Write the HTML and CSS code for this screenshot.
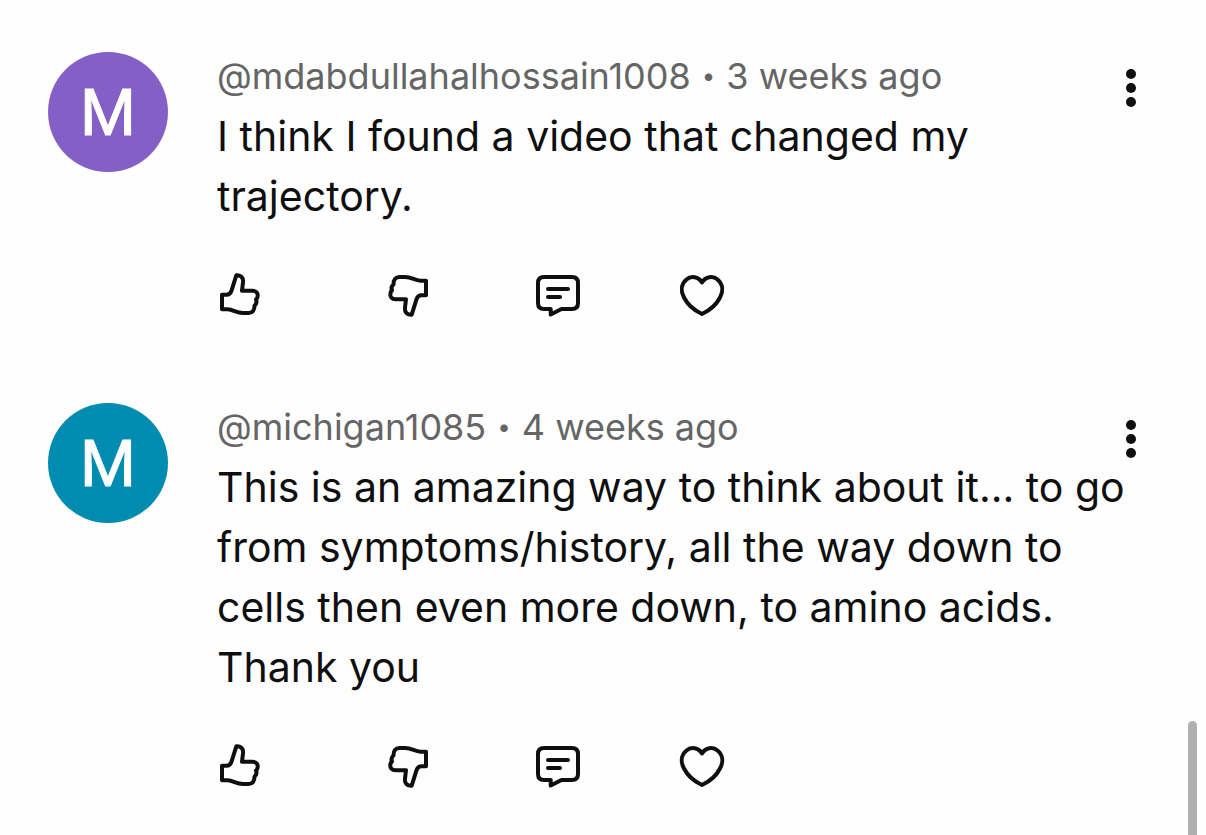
FILE: index.html
```html
<!DOCTYPE html>
<html lang="en">
<head>
<meta charset="utf-8">
<meta name="viewport" content="width=device-width, initial-scale=1">
<title>Comments</title>
<link rel="stylesheet" href="styles.css">
</head>
<body>
<svg class="sprite" aria-hidden="true">
  <symbol id="like" viewBox="0 0 48 48"><path d="M19.300 4.300C23.600 4 26.300 6.500 26.100 10.500L25 19.800H35.500C39 19.800 41.300 22 40.600 25.500C40.500 27 40 27.800 39 28.500C40 31 39.500 33 37.500 34.500C37.700 39 35.500 42 31.500 42H26C19 42 16.500 38.500 10.500 38.300H5V23.700H9.500C12 23.700 13.500 22.500 14.300 20.300Z"/></symbol>
  <symbol id="reply" viewBox="0 0 48 48"><path d="M9 6H37Q43 6 43 12V32Q43 38 37 38H26.500L15.700 43.500V38H9Q3 38 3 32V12Q3 6 9 6ZM13 18H33M13 26H25"/></symbol>
  <symbol id="heart" viewBox="0 0 48 48"><path d="M23 11.500C19.500 5.500 12 4.500 7.500 8.500C2 13 1.500 20 5 26.500C8.500 33.500 15.500 39.500 23 43C30.500 39.500 37.500 33.500 41 26.500C44.500 20 44 13 38.500 8.500C34 4.500 26.500 5.500 23 11.500Z"/></symbol>
</svg>
<main class="comments">
  <article class="comment">
    <div class="avatar avatar-purple">M</div>
    <div class="body">
      <header class="meta"><span>@mdabdullahalhossain1008</span><span class="dot">•</span><span>3 weeks ago</span></header>
      <p class="text">I think I found a video that changed my trajectory.</p>
      <div class="actions">
        <button class="action" aria-label="Like"><svg><use href="#like"/></svg></button>
        <button class="action dislike" aria-label="Dislike"><svg><use href="#like"/></svg></button>
        <button class="action reply" aria-label="Reply"><svg><use href="#reply"/></svg></button>
        <button class="action" aria-label="Heart"><svg><use href="#heart"/></svg></button>
      </div>
    </div>
    <button class="more" aria-label="More options"><i></i><i></i><i></i></button>
  </article>
  <article class="comment">
    <div class="avatar avatar-teal">M</div>
    <div class="body">
      <header class="meta"><span>@michigan1085</span><span class="dot">•</span><span>4 weeks ago</span></header>
      <p class="text">This is an amazing way to think about it... to go from symptoms/history, all the way down to cells then even more down, to amino acids. Thank you</p>
      <div class="actions">
        <button class="action" aria-label="Like"><svg><use href="#like"/></svg></button>
        <button class="action dislike" aria-label="Dislike"><svg><use href="#like"/></svg></button>
        <button class="action reply" aria-label="Reply"><svg><use href="#reply"/></svg></button>
        <button class="action" aria-label="Heart"><svg><use href="#heart"/></svg></button>
      </div>
    </div>
    <button class="more" aria-label="More options"><i></i><i></i><i></i></button>
  </article>
</main>
<div class="scrollbar"></div>
</body>
</html>
```
FILE: styles.css
```css
* { box-sizing: border-box; }
body { margin: 0; background: #fefefe; color: #0f0f0f; font-family: Inter, sans-serif; overflow: hidden; }
.sprite { position: absolute; width: 0; height: 0; }
.comments { display: flex; flex-direction: column; gap: 84px; padding: 52px 64px 0 48px; }
.comment { display: grid; grid-template-columns: 120px minmax(0, 1fr) 22px; }
.avatar { width: 120px; height: 120px; padding-top: 4px; border-radius: 50%; display: flex; align-items: center; justify-content: center; color: #fff; font: 400 64px/116px Roboto, sans-serif; -webkit-text-stroke: 1px #fff; }
.avatar-purple { background: #845fc5; }
.avatar-teal { background: #008cb0; }
.body { padding-left: 49px; margin-right: -16px; }
.meta { display: flex; gap: 11px; font-size: 36px; line-height: 48px; color: #656565; }
.dot { font-size: 24px; }
.text { margin: 6px 0 0; font-size: 41px; line-height: 60px; }
.actions { display: flex; margin-top: 45px; }
.action { border: 0; padding: 0; background: none; width: 48px; height: 48px; color: inherit; }
.action svg { display: block; width: 48px; height: 48px; fill: none; stroke: currentColor; stroke-width: 4; stroke-linejoin: round; stroke-linecap: round; }
.dislike { margin-left: 118px; }
.dislike svg { transform: rotate(180deg); }
.reply { margin: 0 96px 0 104px; }
.more { width: 22px; height: 48px; margin-top: 12px; border: 0; padding: 0; background: none; display: flex; flex-direction: column; align-items: center; justify-content: center; gap: 4px; }
.more i { width: 10px; height: 10px; border-radius: 50%; background: #0f0f0f; }
.scrollbar { position: fixed; right: 9px; top: 721px; bottom: 0; width: 9px; border-radius: 5px 5px 0 0; background: #b0b0b3; }
```
